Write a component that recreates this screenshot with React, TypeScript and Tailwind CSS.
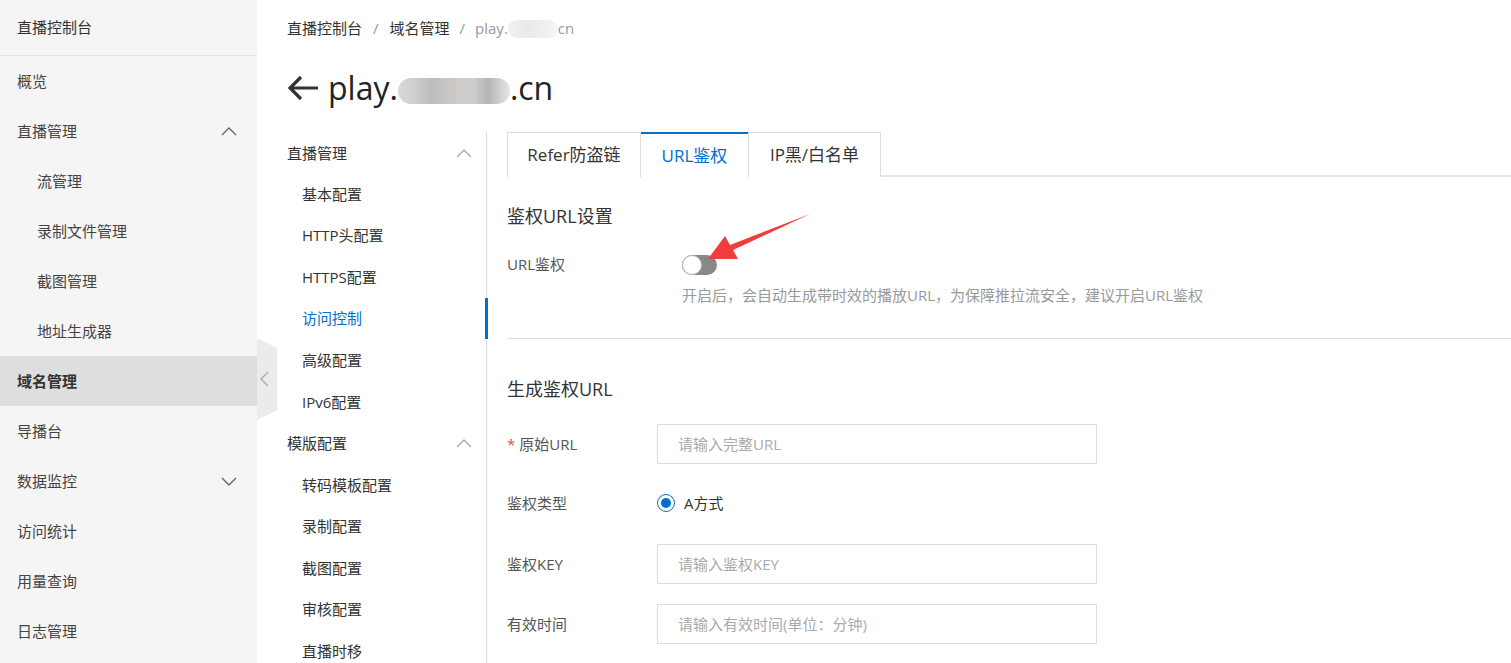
import React from "react";

type SideItem = { label: string; sub?: boolean; chevron?: "up" | "down"; active?: boolean };

const sideItems: SideItem[] = [
  { label: "概览" },
  { label: "直播管理", chevron: "up" },
  { label: "流管理", sub: true },
  { label: "录制文件管理", sub: true },
  { label: "截图管理", sub: true },
  { label: "地址生成器", sub: true },
  { label: "域名管理", active: true },
  { label: "导播台" },
  { label: "数据监控", chevron: "down" },
  { label: "访问统计" },
  { label: "用量查询" },
  { label: "日志管理" },
];

type NavItem = { label: string; group?: boolean; active?: boolean };

const navItems: NavItem[] = [
  { label: "直播管理", group: true },
  { label: "基本配置" },
  { label: "HTTP头配置" },
  { label: "HTTPS配置" },
  { label: "访问控制", active: true },
  { label: "高级配置" },
  { label: "IPv6配置" },
  { label: "模版配置", group: true },
  { label: "转码模板配置" },
  { label: "录制配置" },
  { label: "截图配置" },
  { label: "审核配置" },
  { label: "直播时移" },
];

function Chevron({ dir, className }: { dir: "up" | "down" | "left"; className?: string }) {
  const pts = dir === "up" ? "1,8 8,1 15,8" : dir === "down" ? "1,1 8,8 15,1" : "8,1 1,8 8,15";
  const w = dir === "left" ? 10 : 16;
  const h = dir === "left" ? 16 : 9;
  return (
    <svg width={w} height={h} viewBox={`0 0 ${w} ${h}`} className={className}>
      <polyline points={pts} fill="none" stroke="currentColor" strokeWidth="1.4" />
    </svg>
  );
}

function FormRow({ label, required, children, className }: { label: string; required?: boolean; children: React.ReactNode; className?: string }) {
  return (
    <div className={`flex items-center h-[40px] shrink-0 ${className ?? ""}`}>
      <div className="w-[150px] text-[15px] text-[#555]">
        {required && <span className="text-[#e34b4b] mr-[4px]">*</span>}
        {label}
      </div>
      {children}
    </div>
  );
}

function TextInput({ placeholder }: { placeholder: string }) {
  return (
    <div className="w-[440px] h-[40px] border border-[#dcdcdc] bg-white flex items-center pl-[20px] text-[15px] text-[#aaa]">
      {placeholder}
    </div>
  );
}

export default function App() {
  return (
    <div className="flex w-[1511px] h-[663px] overflow-hidden bg-white font-['Open_Sans','Noto_Sans_CJK_SC',sans-serif] text-[#333]">
      {/* Left sidebar */}
      <div className="relative w-[257px] shrink-0 bg-[#f5f5f5]">
        <div className="h-[56px] flex items-center pl-[17px] text-[15px] border-b border-[#e2e2e2]">直播控制台</div>
        {sideItems.map((it) => (
          <div
            key={it.label}
            className={`h-[50px] flex items-center justify-between pr-[20px] text-[15px] ${it.sub ? "pl-[37px]" : "pl-[17px]"} ${
              it.active ? "bg-[#dedede] font-bold text-[#333]" : "text-[#444]"
            }`}
          >
            <span>{it.label}</span>
            {it.chevron && <Chevron dir={it.chevron} className="text-[#666]" />}
          </div>
        ))}
        {/* collapse handle */}
        <div className="absolute left-[257px] top-[338px] w-[20px] h-[82px] bg-[#ebebeb] [clip-path:polygon(0_0,100%_12%,100%_88%,0_100%)] flex items-center justify-center">
          <Chevron dir="left" className="text-[#aaa] ml-[-4px]" />
        </div>
      </div>

      {/* Main */}
      <div className="flex-1 flex flex-col pl-[30px] min-w-0 overflow-hidden">
        {/* Breadcrumb */}
        <div className="h-[55px] shrink-0 flex items-center text-[15px] pt-[2px]">
          <span>直播控制台</span>
          <span className="mx-[11px] text-[#999]">/</span>
          <span>域名管理</span>
          <span className="mx-[10px] text-[#999]">/</span>
          <span className="text-[#999]">play.</span>
          <span className="inline-block w-[50px] h-[18px] rounded-full bg-[linear-gradient(90deg,#f2f2f2,#e9e9e9_40%,#efefef_70%,#f5f5f5)]" />
          <span className="text-[#999]">cn</span>
        </div>

        {/* Title */}
        <div className="h-[66px] shrink-0 flex items-center">
          <svg width="32" height="26" viewBox="0 0 32 26" className="text-[#333] mr-[9px]">
            <path d="M31 13H4 M14 2 L3 13 L14 24" fill="none" stroke="currentColor" strokeWidth="3.2" />
          </svg>
          <span className="text-[32px] leading-none text-[#222]">play.</span>
          <span className="inline-block w-[112px] h-[26px] mt-[6px] rounded-full bg-[linear-gradient(90deg,#d8d8da,#cfcfcf_15%,#bcbcbc_30%,#c8c8c8_45%,#cfcbc8_55%,#cdcdd1_68%,#b3b5b6_80%,#e6e6e6)]" />
          <span className="text-[32px] leading-none text-[#222]">.cn</span>
        </div>

        <div className="flex shrink-0 mt-[11px]">
          {/* Secondary nav */}
          <div className="w-[200px] shrink-0 border-r border-[#dcdcdc] pt-[1px] pb-[20px]">
            {navItems.map((it, i) => (
              <div
                key={it.label}
                className={`relative ${i === 0 ? "h-[40px]" : "h-[41.6px]"} flex items-center justify-between pr-[14px] text-[15px] ${it.group ? "" : "pl-[15px]"} ${
                  it.active ? "text-[#0070cc]" : "text-[#333]"
                }`}
              >
                <span>{it.label}</span>
                {it.group && <Chevron dir="up" className="text-[#aaa]" />}
                {it.active && <span className="absolute right-[-2px] top-0 w-[3px] h-full bg-[#0070cc]" />}
              </div>
            ))}
          </div>

          {/* Content */}
          <div className="relative flex-1 flex flex-col pl-[20px]">
            {/* Tabs */}
            <div className="flex h-[45px] shrink-0 border-b-2 border-[#e5e5e5]">
              <div className="w-[134px] flex items-center justify-center border border-b-0 border-[#dcdcdc] text-[17px] text-[#333] mb-[-2px] bg-white">
                Refer防盗链
              </div>
              <div className="w-[107px] flex items-center justify-center border-t-2 border-t-[#0070cc] text-[17px] text-[#0070cc] bg-white mb-[-2px]">
                URL鉴权
              </div>
              <div className="w-[133px] flex items-center justify-center border border-b-0 border-[#dcdcdc] text-[17px] text-[#333] mb-[-2px] bg-white">
                IP黑/白名单
              </div>
            </div>

            <div className="mt-[27px] text-[18px] leading-[24px] text-[#333]">鉴权URL设置</div>

            <div className="flex items-center mt-[26px] h-[20px] shrink-0">
              <div className="w-[175px] text-[15px] text-[#555]">URL鉴权</div>
              <div className="relative w-[35px] h-[20px] rounded-full bg-[#888] mt-[2px]">
                <div className="absolute left-0 top-0 w-[20px] h-[20px] rounded-full bg-white border border-[#b5b5b5]" />
              </div>
            </div>
            <div className="ml-[175px] mt-[11px] text-[15px] leading-[20px] text-[#999]">
              开启后，会自动生成带时效的播放URL，为保障推拉流安全，建议开启URL鉴权
            </div>

            <div className="mt-[33px] border-t border-[#e0e0e0]" />

            <div className="mt-[38px] text-[18px] leading-[24px] text-[#333]">生成鉴权URL</div>

            <FormRow label="原始URL" required className="mt-[23px]">
              <TextInput placeholder="请输入完整URL" />
            </FormRow>
            <FormRow label="鉴权类型" className="mt-[19px]">
              <div className="flex items-center text-[15px] text-[#333]">
                <span className="w-[18px] h-[18px] rounded-full border border-[#0070cc] flex items-center justify-center">
                  <span className="w-[10px] h-[10px] rounded-full bg-[#0070cc]" />
                </span>
                <span className="ml-[9px]">A方式</span>
              </div>
            </FormRow>
            <FormRow label="鉴权KEY" className="mt-[21px]">
              <TextInput placeholder="请输入鉴权KEY" />
            </FormRow>
            <FormRow label="有效时间" className="mt-[20px]">
              <TextInput placeholder="请输入有效时间(单位：分钟)" />
            </FormRow>

            {/* annotation arrow */}
            <svg className="absolute left-0 top-0 pointer-events-none" width="340" height="140" viewBox="487 132 340 140">
              <polygon points="810,214 730,245 725,236 708,259 738,259 733,250" fill="#f23d3d" />
            </svg>
          </div>
        </div>
      </div>
    </div>
  );
}
